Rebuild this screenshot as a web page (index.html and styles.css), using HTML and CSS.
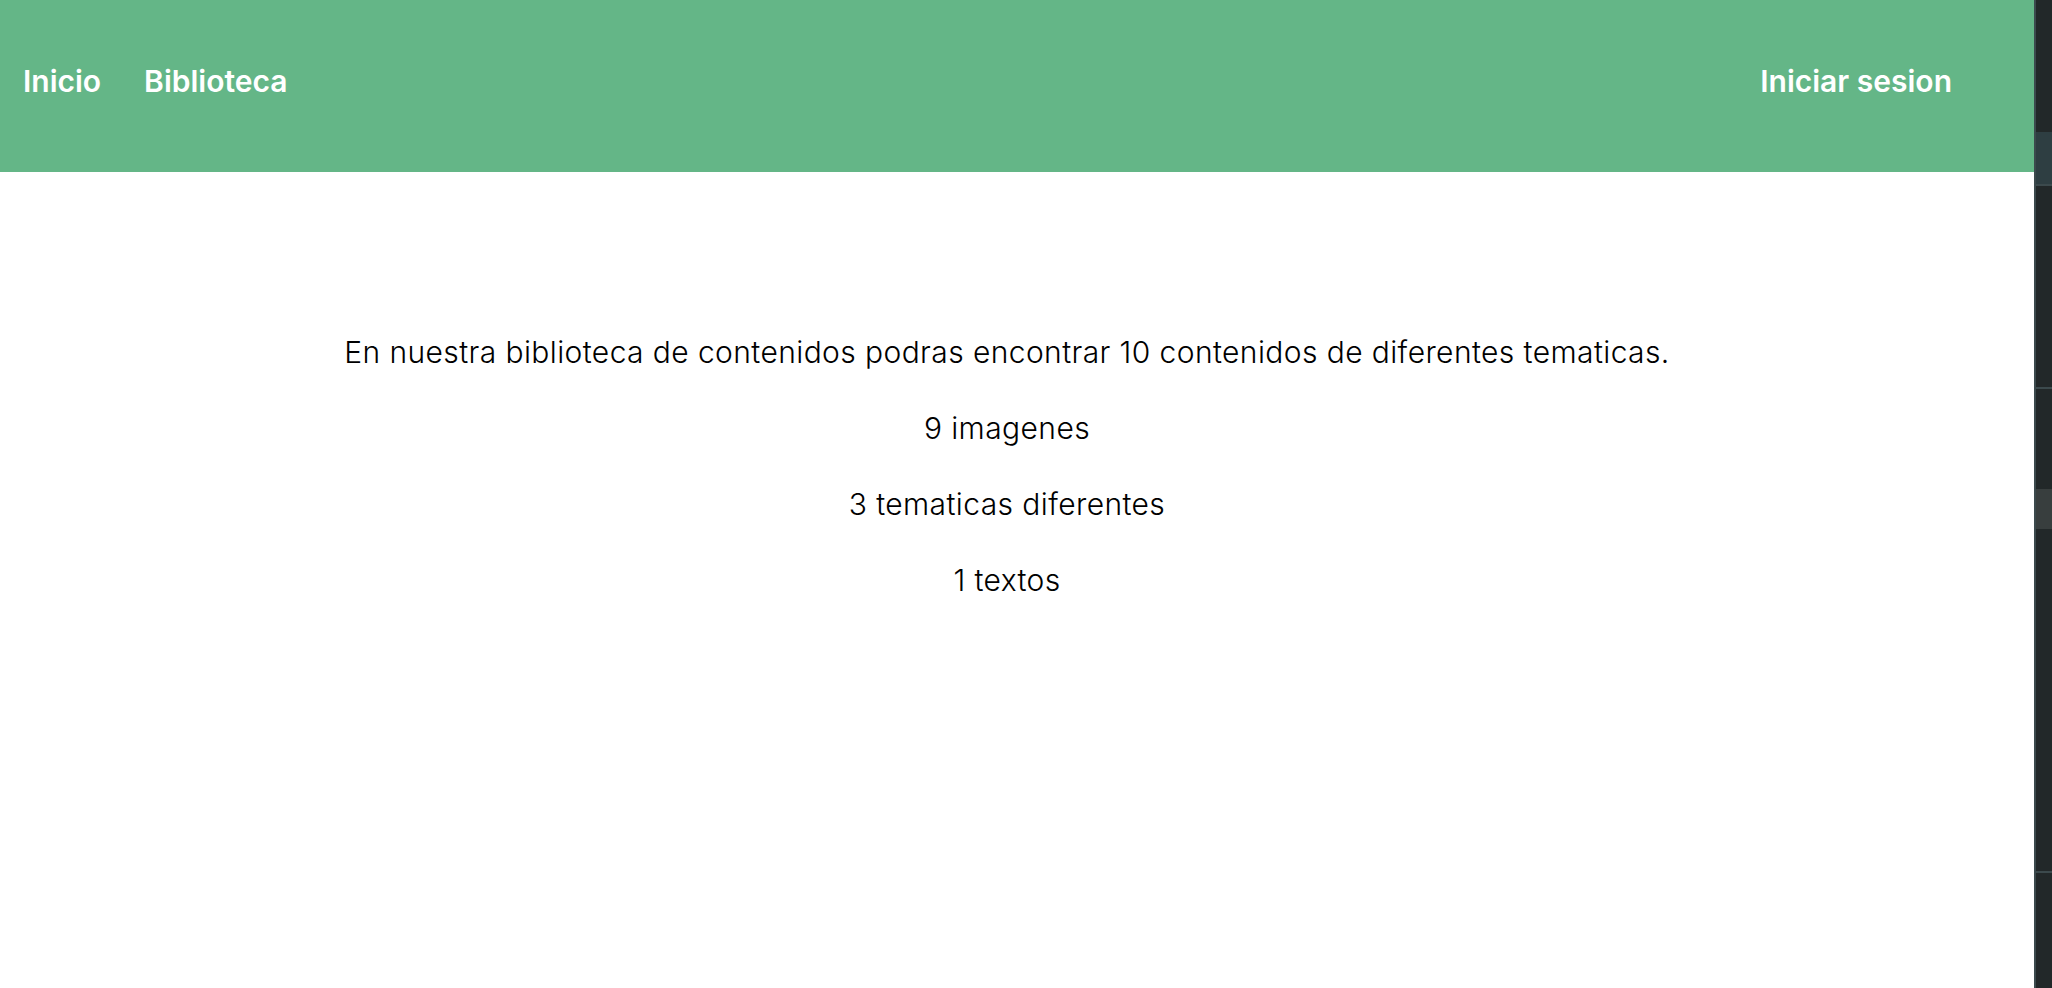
FILE: index.html
```html
<!DOCTYPE html>
<html lang="es">
<head>
<meta charset="utf-8">
<title>Biblioteca</title>
<link rel="stylesheet" href="styles.css">
</head>
<body>
<div class="app">
  <div class="page">
    <header class="topbar">
      <nav class="nav-left">
        <a class="nav-link" href="#">Inicio</a>
        <a class="nav-link" href="#">Biblioteca</a>
      </nav>
      <a class="nav-link login" href="#">Iniciar sesion</a>
    </header>
    <main class="content">
      <p class="line">En nuestra biblioteca de contenidos podras encontrar 10 contenidos de diferentes tematicas.</p>
      <p class="line">9 imagenes</p>
      <p class="line">3 tematicas diferentes</p>
      <p class="line">1 textos</p>
    </main>
  </div>
  <aside class="side">
    <div class="side-top"></div>
    <div class="side-tab"></div>
    <div class="side-seg side-seg1"></div>
    <div class="side-seg side-seg2"></div>
    <div class="side-block"></div>
    <div class="side-seg side-seg3"></div>
    <div class="side-seg side-seg4"></div>
  </aside>
</div>
</body>
</html>
```
FILE: styles.css
```css
* { box-sizing: border-box; }
html, body { margin: 0; padding: 0; height: 100%; }
body {
  font-family: Inter, Lato, "Noto Sans", sans-serif;
  background: #ffffff;
  color: #000;
}
.app {
  display: flex;
  height: 988px;
  overflow: hidden;
}
.page {
  flex: 1;
  min-width: 0;
  background: #fff;
}
.topbar {
  height: 172px;
  background: #64b687;
  display: flex;
  align-items: center;
  justify-content: space-between;
  padding: 0 82px 10px 23px;
}
.nav-left {
  display: flex;
  gap: 43px;
}
.nav-link {
  color: #fff;
  text-decoration: none;
  font-weight: 600;
  font-size: 30px;
}
.content {
  padding: 162px 20px 0 0;
  text-align: center;
}
.line {
  margin: 0 0 40px 0;
  font-size: 30px;
  font-weight: 300;
  line-height: 36px;
  letter-spacing: 0.4px;
}
.side {
  width: 18px;
  background: #222829;
  border-left: 2px solid #3c4a4d;
  display: flex;
  flex-direction: column;
}
.side-top { height: 132px; }
.side-tab { height: 52px; background: #2e3e42; }
.side-seg { border-top: 2px solid #3c4a4d; }
.side-seg1 { height: 203px; }
.side-seg2 { height: 102px; }
.side-block { height: 40px; background: #383e3e; }
.side-seg3 { height: 342px; border-top: none; }
.side-seg4 { flex: 1; }
```
